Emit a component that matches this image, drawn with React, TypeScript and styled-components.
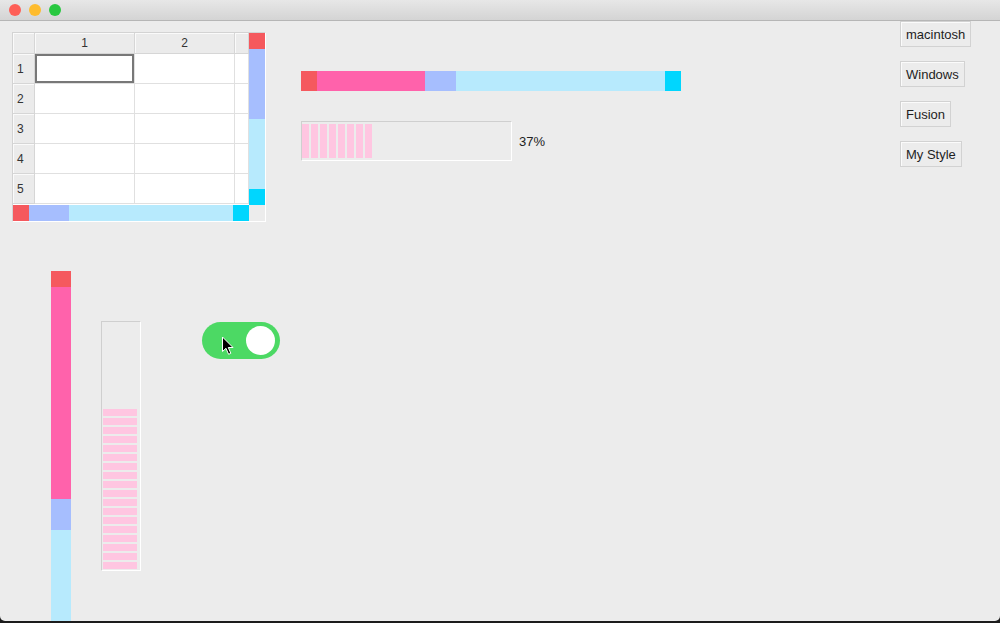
import React from "react";
import styled, { createGlobalStyle } from "styled-components";

const C = {
  red: "#f5595e",
  pink: "#ff62ab",
  blue: "#a6befe",
  light: "#b7eafd",
  cyan: "#00d6fe",
  chunk: "#ffc6e1",
  green: "#4cd964",
  bg: "#ececec",
};

const Global = createGlobalStyle`
  html, body { margin: 0; padding: 0; background: #1c1c1c; overflow: hidden; }
  * { box-sizing: border-box; }
  body { font-family: "Liberation Sans", Arial, sans-serif; }
`;

const Window = styled.div`
  width: 1000px;
  height: 621px;
  background: ${C.bg};
  border-bottom-left-radius: 5px;
  border-bottom-right-radius: 5px;
  overflow: hidden;
  display: flex;
  flex-direction: column;
`;

const TitleBar = styled.div`
  height: 21px;
  flex: none;
  display: flex;
  align-items: center;
  gap: 8px;
  padding: 0 0 1px 9px;
  background: linear-gradient(#e7e7e7, #d4d4d4);
  border-bottom: 1px solid #b6b6b6;
`;

const Light = styled.span<{ $color: string }>`
  width: 12px;
  height: 12px;
  border-radius: 50%;
  background: ${(p) => p.$color};
`;

const Content = styled.div`
  flex: 1;
  display: flex;
  flex-direction: column;
  overflow: hidden;
`;

const TopRow = styled.div`
  display: flex;
  align-items: flex-start;
  padding-left: 12px;
`;

const TableFrame = styled.div`
  margin-top: 11px;
  width: 254px;
  height: 190px;
  border: 1px solid;
  border-color: #d3d3d3 #ffffff #ffffff #d3d3d3;
  display: grid;
  grid-template-columns: 236px 16px;
  grid-template-rows: 172px 16px;
`;

const Grid = styled.div`
  display: grid;
  grid-template-columns: 22px 100px 100px 14px;
  grid-template-rows: 21px repeat(5, 30px);
  background: #fff;
  overflow: hidden;
`;

const HeaderCell = styled.div<{ $align?: string }>`
  background: #ebebeb;
  border-right: 1px solid #d6d6d6;
  border-bottom: 1px solid #d6d6d6;
  box-shadow: inset 1px 1px 0 #fafafa;
  display: flex;
  align-items: center;
  justify-content: ${(p) => p.$align || "center"};
  padding-left: ${(p) => (p.$align ? "4px" : "0")};
  font-size: 12px;
  color: #333;
`;

const Cell = styled.div<{ $selected?: boolean }>`
  background: #fff;
  border-right: 1px solid #e0e0e0;
  border-bottom: 1px solid #e0e0e0;
  box-shadow: ${(p) => (p.$selected ? "inset 0 0 0 2px #787878" : "none")};
`;

const Track = styled.div<{ $vertical?: boolean }>`
  display: flex;
  flex-direction: ${(p) => (p.$vertical ? "column" : "row")};
`;

const Segment = styled.div<{ $color: string; $size?: number }>`
  background: ${(p) => p.$color};
  flex: ${(p) => (p.$size ? `0 0 ${p.$size}px` : "1 1 auto")};
`;

const Corner = styled.div`
  background: ${C.bg};
`;

const Middle = styled.div`
  margin-left: 35px;
  margin-top: 50px;
  display: flex;
  flex-direction: column;
`;

const HBar = styled(Track)`
  width: 380px;
  height: 20px;
`;

const ProgressRow = styled.div`
  margin-top: 30px;
  display: flex;
  align-items: center;
  gap: 7px;
`;

const Progress = styled.div<{ $vertical?: boolean }>`
  border: 1px solid;
  border-color: #cfcfcf #ffffff #ffffff #cfcfcf;
  display: flex;
  gap: 2px;
  flex-direction: ${(p) => (p.$vertical ? "column" : "row")};
  justify-content: ${(p) => (p.$vertical ? "flex-end" : "flex-start")};
  width: ${(p) => (p.$vertical ? "40px" : "211px")};
  height: ${(p) => (p.$vertical ? "250px" : "40px")};
  padding: ${(p) => (p.$vertical ? "0 0 1px 1px" : "2px 0 1px 0")};
`;

const Chunk = styled.div<{ $vertical?: boolean }>`
  background: ${C.chunk};
  width: ${(p) => (p.$vertical ? "34px" : "7px")};
  height: ${(p) => (p.$vertical ? "7px" : "34px")};
  flex: none;
`;

const Percent = styled.span`
  font-size: 13px;
  color: #222;
`;

const ButtonColumn = styled.div`
  margin-left: auto;
  width: 100px;
  display: flex;
  flex-direction: column;
  align-items: flex-start;
  gap: 14px;
`;

const StyleButton = styled.button`
  height: 26px;
  padding: 0 5px;
  margin: 0;
  background: ${C.bg};
  border: 1px solid #d2d2d2;
  box-shadow: inset 1px 1px 0 #fbfbfb;
  font-family: "Liberation Sans", Arial, sans-serif;
  font-size: 13px;
  color: #1e1e1e;
`;

const BottomRow = styled.div`
  margin-top: 49px;
  display: flex;
  align-items: flex-start;
  padding-left: 51px;
`;

const VBar = styled(Track)`
  width: 20px;
  height: 360px;
`;

const VProgressWrap = styled.div`
  margin-left: 30px;
  margin-top: 50px;
`;

const Toggle = styled.div<{ $on?: boolean }>`
  position: relative;
  margin-left: 61px;
  margin-top: 51px;
  width: 78px;
  height: 37px;
  border-radius: 19px;
  background: ${(p) => (p.$on ? C.green : "#ddd")};
  display: flex;
  align-items: center;
  justify-content: ${(p) => (p.$on ? "flex-end" : "flex-start")};
  padding: 0 5px;
`;

const Knob = styled.div`
  width: 29px;
  height: 29px;
  border-radius: 50%;
  background: #fff;
`;

const Cursor = styled.svg`
  position: absolute;
  left: 19px;
  top: 14px;
`;

export default function App() {
  const rows = [1, 2, 3, 4, 5];
  return (
    <>
      <Global />
      <Window>
        <TitleBar>
          <Light $color="#fe5f57" />
          <Light $color="#febc2e" />
          <Light $color="#28c840" />
        </TitleBar>
        <Content>
          <TopRow>
            <TableFrame>
              <Grid>
                <HeaderCell />
                <HeaderCell>1</HeaderCell>
                <HeaderCell>2</HeaderCell>
                <HeaderCell />
                {rows.map((r) => (
                  <React.Fragment key={r}>
                    <HeaderCell $align="flex-start">{r}</HeaderCell>
                    <Cell $selected={r === 1} />
                    <Cell />
                    <Cell />
                  </React.Fragment>
                ))}
              </Grid>
              <Track $vertical>
                <Segment $color={C.red} $size={16} />
                <Segment $color={C.blue} $size={70} />
                <Segment $color={C.light} $size={70} />
                <Segment $color={C.cyan} $size={16} />
              </Track>
              <Track>
                <Segment $color={C.red} $size={16} />
                <Segment $color={C.blue} $size={40} />
                <Segment $color={C.light} />
                <Segment $color={C.cyan} $size={16} />
              </Track>
              <Corner />
            </TableFrame>

            <Middle>
              <HBar>
                <Segment $color={C.red} $size={16} />
                <Segment $color={C.pink} $size={108} />
                <Segment $color={C.blue} $size={31} />
                <Segment $color={C.light} />
                <Segment $color={C.cyan} $size={16} />
              </HBar>
              <ProgressRow>
                <Progress>
                  {Array.from({ length: 8 }).map((_, i) => (
                    <Chunk key={i} />
                  ))}
                </Progress>
                <Percent>37%</Percent>
              </ProgressRow>
            </Middle>

            <ButtonColumn>
              <StyleButton>macintosh</StyleButton>
              <StyleButton>Windows</StyleButton>
              <StyleButton>Fusion</StyleButton>
              <StyleButton>My Style</StyleButton>
            </ButtonColumn>
          </TopRow>

          <BottomRow>
            <VBar $vertical>
              <Segment $color={C.red} $size={16} />
              <Segment $color={C.pink} $size={212} />
              <Segment $color={C.blue} $size={31} />
              <Segment $color={C.light} />
            </VBar>
            <VProgressWrap>
              <Progress $vertical>
                {Array.from({ length: 18 }).map((_, i) => (
                  <Chunk key={i} $vertical />
                ))}
              </Progress>
            </VProgressWrap>
            <Toggle $on>
              <Knob />
              <Cursor width="14" height="20" viewBox="0 0 14 20">
                <path
                  d="M1.5 1 L1.5 15.5 L5 12.3 L7.6 18.3 L9.8 17.3 L7.3 11.5 L12 11.5 Z"
                  fill="#000"
                  stroke="#fff"
                  strokeWidth="1"
                  strokeLinejoin="round"
                />
              </Cursor>
            </Toggle>
          </BottomRow>
        </Content>
      </Window>
    </>
  );
}
